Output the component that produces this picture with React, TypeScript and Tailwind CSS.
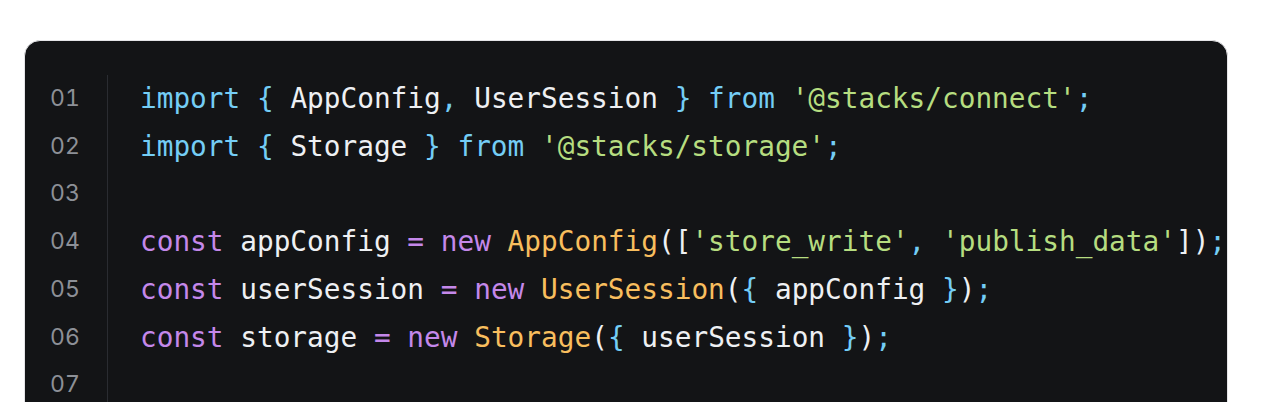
import React from "react";

type Tok = [string, string];

// token colours
const KW = "text-[#74cdf5]";
const DECL = "text-[#c488ea]";
const STR = "text-[#b6dd80]";
const CLS = "text-[#f8be5e]";
const ID = "text-[#eef0f3]";

const lines: Tok[][] = [
  [
    ["import", KW],
    [" { ", KW],
    ["AppConfig", ID],
    [", ", KW],
    ["UserSession", ID],
    [" } ", KW],
    ["from", KW],
    [" ", ID],
    ["'@stacks/connect'", STR],
    [";", KW],
  ],
  [
    ["import", KW],
    [" { ", KW],
    ["Storage", ID],
    [" } ", KW],
    ["from", KW],
    [" ", ID],
    ["'@stacks/storage'", STR],
    [";", KW],
  ],
  [],
  [
    ["const", DECL],
    [" appConfig ", ID],
    ["=", DECL],
    [" ", ID],
    ["new", DECL],
    [" ", ID],
    ["AppConfig", CLS],
    ["([", ID],
    ["'store_write'", STR],
    [", ", KW],
    ["'publish_data'", STR],
    ["])", ID],
    [";", KW],
  ],
  [
    ["const", DECL],
    [" userSession ", ID],
    ["=", DECL],
    [" ", ID],
    ["new", DECL],
    [" ", ID],
    ["UserSession", CLS],
    ["(", ID],
    ["{", KW],
    [" appConfig ", ID],
    ["}", KW],
    [")", ID],
    [";", KW],
  ],
  [
    ["const", DECL],
    [" storage ", ID],
    ["=", DECL],
    [" ", ID],
    ["new", DECL],
    [" ", ID],
    ["Storage", CLS],
    ["(", ID],
    ["{", KW],
    [" userSession ", ID],
    ["}", KW],
    [")", ID],
    [";", KW],
  ],
  [],
  [],
];

export default function App() {
  return (
    <div className="min-h-screen bg-white pt-[40px] pl-[24px]">
      <div className="w-[1204px] overflow-hidden rounded-[16px] border border-[#e4e4e7] bg-[#131416] pt-[34px] pb-[40px]">
        <div className="flex">
          <div className="w-[83px] shrink-0 border-r border-[#2a2c31] pl-[25px] font-['Inter',sans-serif] text-[23px] tabular-nums leading-[47.7px] text-[#8d9097]">
            {lines.map((_, i) => (
              <div key={i}>{String(i + 1).padStart(2, "0")}</div>
            ))}
          </div>
          <div className="min-w-0 flex-1 overflow-hidden pl-[32px] font-['DejaVu_Sans_Mono',monospace] text-[27.75px] leading-[47.7px]">
            {lines.map((toks, i) => (
              <div key={i} className="whitespace-pre">
                {toks.length === 0
                  ? " "
                  : toks.map(([t, c], j) => (
                      <span key={j} className={c}>
                        {t}
                      </span>
                    ))}
              </div>
            ))}
          </div>
        </div>
      </div>
    </div>
  );
}
